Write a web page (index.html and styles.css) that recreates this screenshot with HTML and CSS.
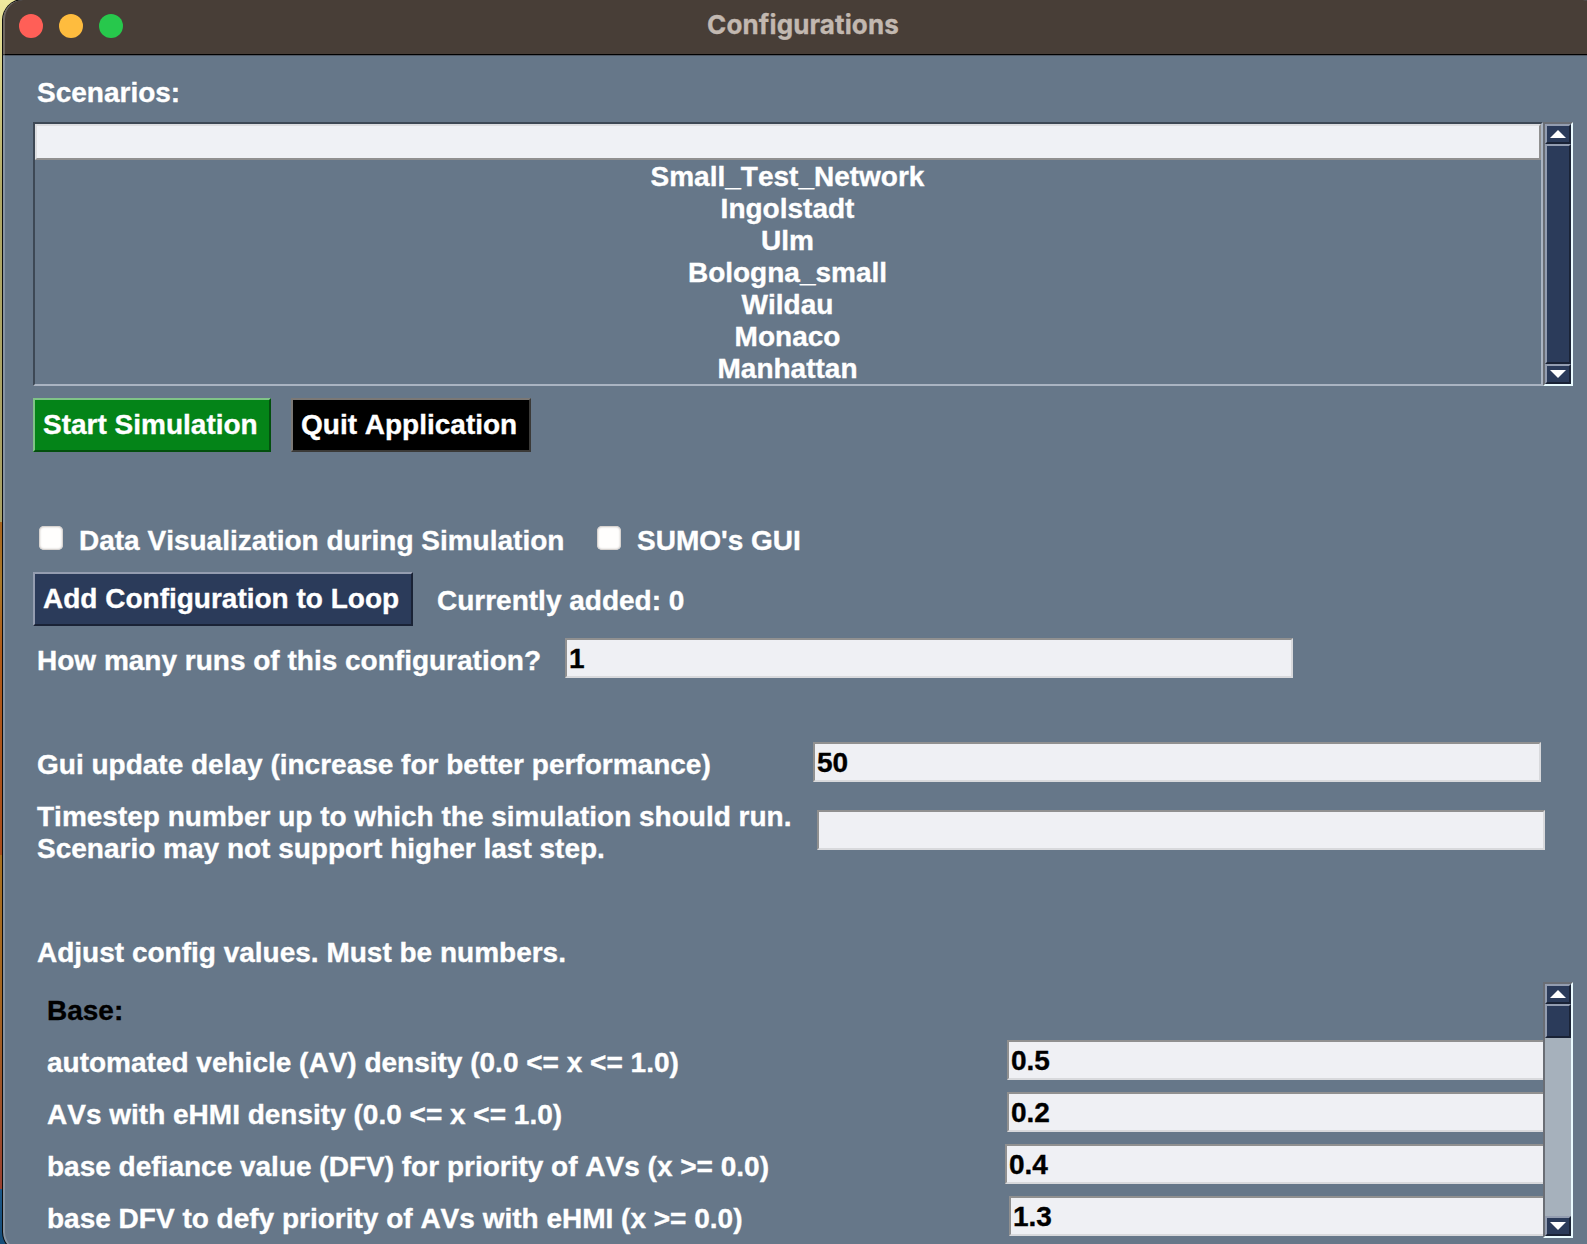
FILE: index.html
```html
<!DOCTYPE html>
<html lang="en">
<head>
<meta charset="utf-8">
<title>Configurations</title>
<link rel="stylesheet" href="styles.css">
</head>
<body>
<div class="window">
  <header class="titlebar">
    <div class="lights"><i class="light close"></i><i class="light minimize"></i><i class="light zoom"></i></div>
    <div class="title">Configurations</div>
  </header>
  <main class="content">
    <div class="label">Scenarios:</div>
    <div class="list-row">
      <ul class="listbox">
        <li class="selected"></li>
        <li>Small_Test_Network</li>
        <li>Ingolstadt</li>
        <li>Ulm</li>
        <li>Bologna_small</li>
        <li>Wildau</li>
        <li>Monaco</li>
        <li>Manhattan</li>
      </ul>
      <div class="scrollbar">
        <div class="bevel arrow"><svg width="16" height="8" viewBox="0 0 16 8"><path d="M0 8L8 0L16 8Z"/></svg></div>
        <div class="bevel thumb full"></div>
        <div class="bevel arrow down"><svg width="16" height="8" viewBox="0 0 16 8"><path d="M0 0H16L8 8Z"/></svg></div>
      </div>
    </div>
    <div class="row actions">
      <button class="btn start">Start Simulation</button>
      <button class="btn quit">Quit Application</button>
    </div>
    <div class="row checks">
      <span class="box"></span><span class="label first">Data Visualization during Simulation</span>
      <span class="box"></span><span class="label">SUMO's GUI</span>
    </div>
    <div class="row loop">
      <button class="btn add">Add Configuration to Loop</button>
      <span class="label">Currently added: 0</span>
    </div>
    <div class="row runs">
      <span class="label">How many runs of this configuration?</span>
      <input class="field" value="1">
    </div>
    <div class="row delay">
      <span class="label">Gui update delay (increase for better performance)</span>
      <input class="field" value="50">
    </div>
    <div class="row steps">
      <span class="label">Timestep number up to which the simulation should run.<br>Scenario may not support higher last step.</span>
      <input class="field" value="">
    </div>
    <div class="label adjust">Adjust config values. Must be numbers.</div>
    <div class="config">
      <div class="config-rows">
        <div class="config-row heading"><span class="label">Base:</span></div>
        <div class="config-row"><span class="label">automated vehicle (AV) density (0.0 &lt;= x &lt;= 1.0)</span><input class="field" value="0.5"></div>
        <div class="config-row"><span class="label">AVs with eHMI density (0.0 &lt;= x &lt;= 1.0)</span><input class="field" value="0.2"></div>
        <div class="config-row outdent"><span class="label">base defiance value (DFV) for priority of AVs (x &gt;= 0.0)</span><input class="field" value="0.4"></div>
        <div class="config-row indent"><span class="label">base DFV to defy priority of AVs with eHMI (x &gt;= 0.0)</span><input class="field" value="1.3"></div>
      </div>
      <div class="scrollbar">
        <div class="bevel arrow"><svg width="16" height="8" viewBox="0 0 16 8"><path d="M0 8L8 0L16 8Z"/></svg></div>
        <div class="bevel thumb"></div>
        <div class="bevel arrow down"><svg width="16" height="8" viewBox="0 0 16 8"><path d="M0 0H16L8 8Z"/></svg></div>
      </div>
    </div>
  </main>
</div>
</body>
</html>
```
FILE: styles.css
```css
* { box-sizing: border-box; }
html { height: 100%; overflow: hidden; }
body {
  margin: 0;
  height: 1244px;
  overflow: hidden;
  padding-left: 3px;
  background: linear-gradient(#efe99e 0, #b0a866 190px, #a8a064 522px, #a8641e 522px, #a87828 580px, #b05a18 650px, #a84c1c 855px, #a87020 855px, #a46420 1000px, #984030 1189px, #1c5888 1189px, #164c78 1244px);
  font: bold 28px/32px "Liberation Sans", Arial, sans-serif;
  font-kerning: none;
  -webkit-text-stroke: .35px;
  color: #fff;
}
.window {
  width: 1600px;
  height: 1252px;
  border-radius: 20px;
  overflow: hidden;
  background: #667789;
  box-shadow: 0 0 0 1px #0b0b0b;
  display: flex;
  flex-direction: column;
  position: relative;
}
.window::after {
  content: "";
  position: absolute;
  inset: -1px 0 0;
  border-radius: 20px;
  border: 2px solid rgba(255, 255, 255, .22);
  border-top-width: 1px;
  pointer-events: none;
}
.titlebar {
  height: 56px;
  flex: none;
  display: grid;
  grid-template-columns: 1fr auto 1fr;
  background: #483e37;
  border-bottom: 1px solid #4f5864;
  box-shadow: inset 0 -1px #000;
}
.lights { display: flex; gap: 16px; padding: 14px 0 0 16px; }
.light { width: 24px; height: 24px; border-radius: 50%; }
.close { background: #ff5f57; }
.minimize { background: #febc3e; }
.zoom { background: #27c84c; }
.title { font: bold 26px/32px Inter, sans-serif; letter-spacing: .12px; color: #c2b8b0; padding-top: 9px; }
.content { display: flex; flex-direction: column; padding: 21px 0 0 30px; }
.content > .label { padding-left: 4px; }
.label { white-space: nowrap; }
.list-row { display: flex; height: 264px; margin-top: 13px; }
.listbox {
  list-style: none;
  margin: 0;
  padding: 0;
  width: 1510px;
  border: 2px solid;
  border-color: #3d4855 #aab4c2 #aab4c2 #3d4855;
  text-align: center;
}
.listbox li { height: 32px; padding: 1px 1px 0 0; }
.listbox .selected {
  height: 36px;
  background: #eff1f5;
  border: 2px solid;
  border-color: #dcdde0 #909090 #909090 #dcdde0;
}
.scrollbar {
  width: 30px;
  display: flex;
  flex-direction: column;
  background: #a6b1bc;
  border: 2px solid;
  border-color: #6a6e75 #e9fbff #e9fbff #6a6e75;
}
.bevel {
  background: #2b3b5a;
  border: 2px solid;
  border-color: #939db0 #1a2336 #1a2336 #939db0;
}
.arrow { height: 20px; flex: none; padding: 4px 0 0 3px; }
.arrow.down { margin-top: auto; }
.arrow svg { display: block; fill: #fff; }
.thumb { height: 34px; }
.thumb.full { height: 220px; }
.row { display: flex; }
.btn {
  height: 54px;
  font: inherit;
  font-kerning: none;
  color: #fff;
  text-align: left;
  white-space: nowrap;
  border: 2px solid;
  padding: 0 0 1px 8px;
  border-radius: 0;
}
.start { width: 238px; background: #048418; border-color: #7fc487 #03500e #03500e #7fc487; }
.quit { width: 240px; margin-left: 20px; background: #000; border-color: #7b7875 #3b3a38 #3b3a38 #7b7875; }
.add { width: 380px; background: #2b3b5a; border-color: #949db0 #1a2336 #1a2336 #949db0; }
.actions { margin-top: 12px; }
.checks { margin-top: 73px; padding-left: 6px; height: 32px; }
.box {
  width: 24px;
  height: 24px;
  margin: 1px 16px 0 0;
  border-radius: 5px;
  background: #fffefd;
  box-shadow: inset 0 0 2px 1px #c9c4c0;
}
.checks .first { width: 518px; }
.loop { margin-top: 15px; }
.loop .label { padding: 13px 0 0 24px; }
.runs { margin-top: 12px; }
.runs .label, .delay .label { padding: 7px 0 0 4px; }
.runs .label { width: 532px; }
.delay { margin-top: 64px; }
.delay .label { width: 780px; }
.steps { margin-top: 19px; }
.steps .label { width: 784px; padding-left: 4px; }
.steps .field { margin-top: 9px; }
.field {
  width: 728px;
  height: 40px;
  font: inherit;
  font-kerning: none;
  color: #000;
  background: #eff0f4;
  border: 2px solid;
  border-color: #909090 #d8d9dc #d8d9dc #909090;
  border-radius: 0;
  padding: 2px 0 0 2px;
  outline: 0;
}
.adjust { margin-top: 72px; }
.config { display: flex; height: 256px; margin-top: 13px; }
.config-rows { width: 1510px; overflow: hidden; padding: 6px 0 0 14px; }
.config-row { display: flex; height: 40px; margin-bottom: 12px; }
.config-row .label { width: 960px; flex: none; padding-top: 7px; }
.config-row .field { flex: none; }
.outdent .label { width: 958px; }
.indent .label { width: 962px; }
.heading { color: #000; }
```
